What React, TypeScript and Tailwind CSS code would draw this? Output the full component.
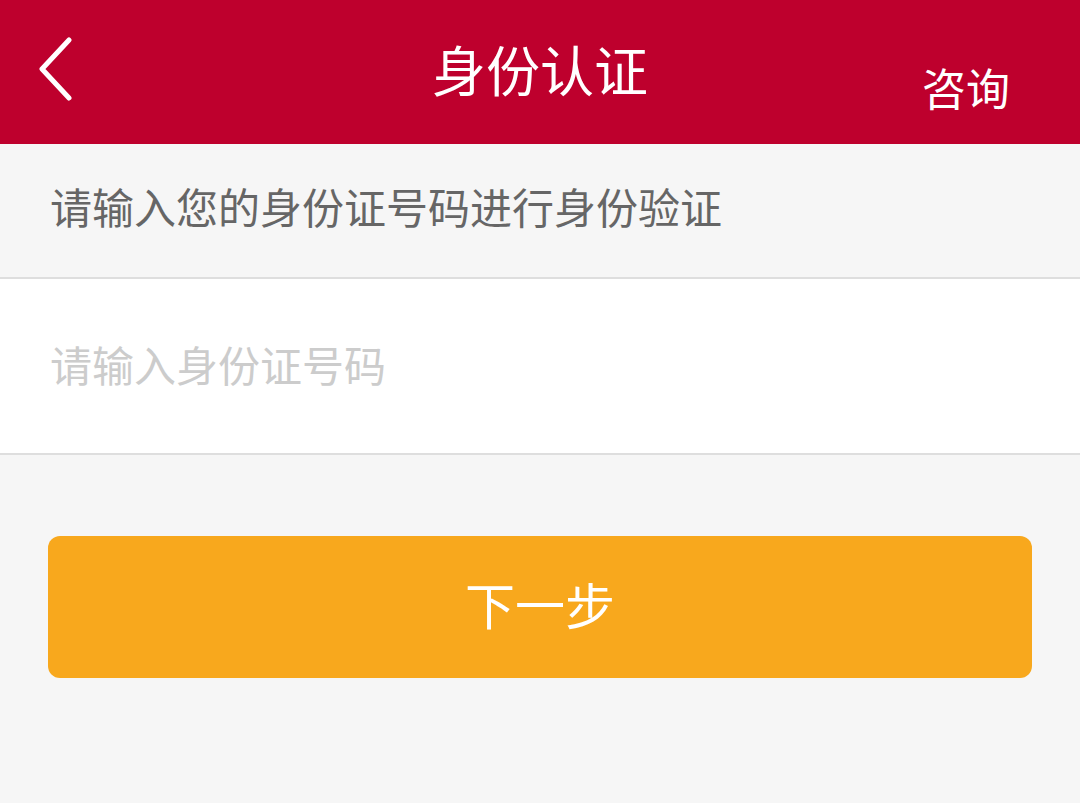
import React from 'react';

const font = { fontFamily: '"Noto Sans CJK SC", "Noto Sans", sans-serif' };

export default function App() {
  const [idNumber, setIdNumber] = React.useState('');

  return (
    <div className="w-[1080px] h-[803px] bg-[#f6f6f6] flex flex-col" style={font}>
      {/* Header */}
      <div className="h-[144px] bg-[#be002d] grid grid-cols-[1fr_auto_1fr] items-center px-[38px] shrink-0">
        <button className="w-[40px] h-[64px] flex items-center -mt-[6px]">
          <svg width="36" height="64" viewBox="0 0 36 64" fill="none">
            <path d="M31 3 L4 32 L31 61" stroke="#ffffff" strokeWidth="5" strokeLinecap="round" strokeLinejoin="round" />
          </svg>
        </button>
        <div className="text-center text-white text-[54px] leading-none -mt-[6px]">身份认证</div>
        <div className="flex justify-end">
          <button className="text-white text-[44px] leading-none mt-[30px] mr-[32px]">咨询</button>
        </div>
      </div>

      {/* Hint */}
      <div className="h-[135px] flex items-center px-[50px] border-b-2 border-[#dedede] shrink-0">
        <span className="text-[42px] text-[#666666] leading-none -mt-[9px]">请输入您的身份证号码进行身份验证</span>
      </div>

      {/* Input */}
      <div className="h-[176px] bg-white flex items-center px-[50px] border-b-2 border-[#dedede] shrink-0">
        <input
          value={idNumber}
          onChange={(e) => setIdNumber(e.target.value)}
          placeholder="请输入身份证号码"
          className="w-full text-[42px] text-[#333333] placeholder:text-[#cccccc] outline-none bg-transparent leading-none -mt-[6px]"
          style={font}
        />
      </div>

      {/* Next button */}
      <div className="px-[48px] pt-[81px]">
        <button className="w-full h-[142px] bg-[#f8a81d] rounded-[12px] text-white text-[50px] leading-none pb-[8px]">
          下一步
        </button>
      </div>
    </div>
  );
}
